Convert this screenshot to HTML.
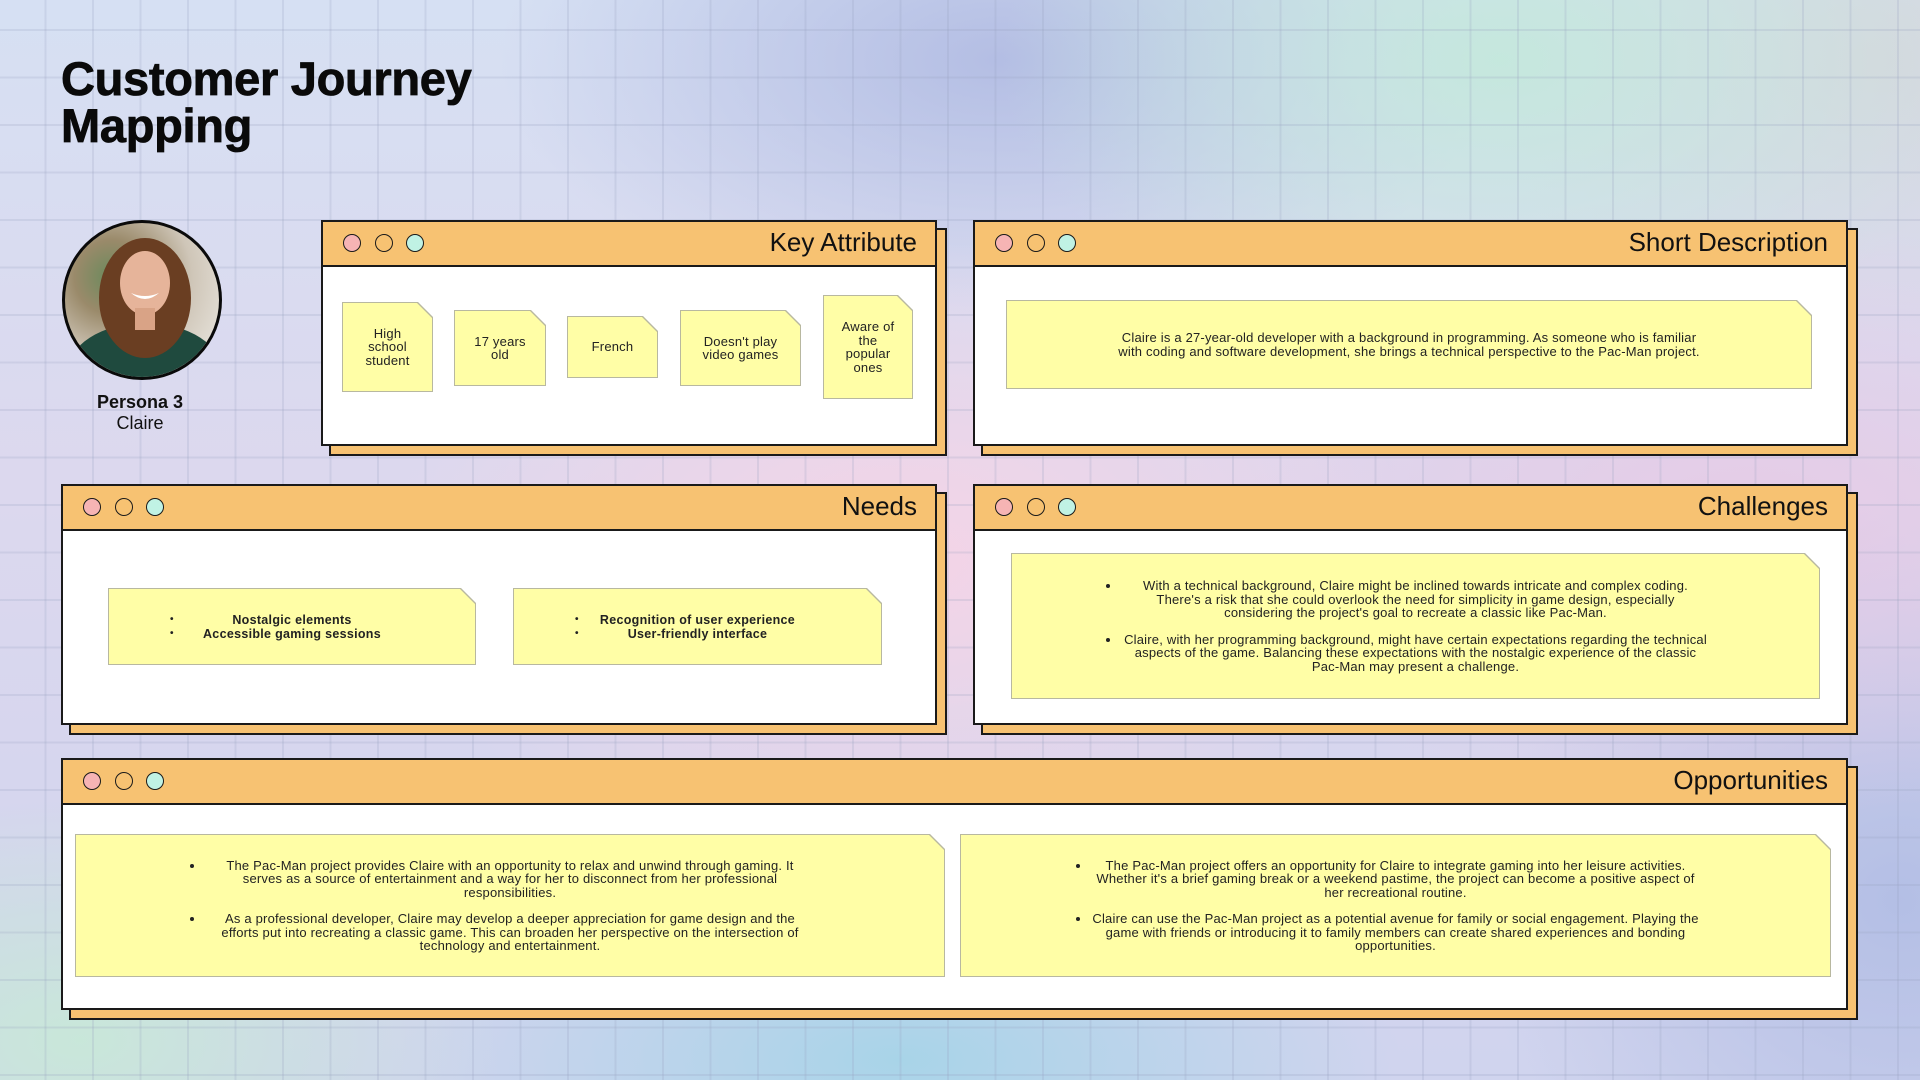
<!DOCTYPE html>
<html><head><meta charset="utf-8">
<style>
*{margin:0;padding:0;box-sizing:border-box}
html,body{width:1920px;height:1080px;overflow:hidden}
body{position:relative;font-family:"Liberation Sans",sans-serif;color:#111;
background:
 radial-gradient(ellipse 520px 320px at 900px 560px, rgba(246,212,230,.95), rgba(246,212,230,0) 100%),
 radial-gradient(ellipse 600px 300px at 1750px 520px, rgba(232,200,228,.8), rgba(232,200,228,0) 100%),
 radial-gradient(ellipse 500px 300px at 1500px 60px, rgba(196,232,220,.95), rgba(196,232,220,0) 100%),
 radial-gradient(ellipse 500px 260px at 1000px 60px, rgba(176,186,226,.9), rgba(176,186,226,0) 100%),
 radial-gradient(ellipse 420px 240px at 80px 1040px, rgba(200,232,216,.95), rgba(200,232,216,0) 100%),
 radial-gradient(ellipse 500px 200px at 900px 1060px, rgba(166,212,232,.95), rgba(166,212,232,0) 100%),
 radial-gradient(ellipse 420px 400px at 1900px 900px, rgba(176,188,228,.9), rgba(176,188,228,0) 100%),
 radial-gradient(ellipse 400px 300px at 1880px 60px, rgba(214,214,220,.9), rgba(214,214,220,0) 100%),
 linear-gradient(180deg,#d6e0f3 0%,#dcd8ee 45%,#d0d4ee 100%);}
.grid{position:absolute;inset:0;
background-image:linear-gradient(90deg,rgba(150,160,190,.22) 2px,transparent 2px),linear-gradient(180deg,rgba(150,160,190,.22) 2px,transparent 2px);
background-size:47.5px 47.5px;background-position:-3px 29px;}
h1{position:absolute;left:61px;top:55px;font-size:47px;line-height:47px;font-weight:700;letter-spacing:-0.3px;color:#0a0a0a;-webkit-text-stroke:0.8px #0a0a0a}
.avatar{position:absolute;left:62px;top:220px;width:160px;height:160px;border-radius:50%;border:3px solid #0a0a0a;overflow:hidden;
background:radial-gradient(circle at 30% 35%,#6a8a5c 0,#9a8a6a 25%,#cfc6b8 55%,#e2ddd4 80%)}
.persona{position:absolute;left:60px;width:160px;text-align:center;font-size:18px}
.win{position:absolute;background:#fff;border:2px solid #1a1a1a;box-shadow:9px 9px 0 -1px #f7c272,9px 9px 0 1px #1a1a1a}
.hd{height:45px;background:#f7c272;border-bottom:2px solid #1a1a1a;position:relative}
.hd .t{position:absolute;right:18px;top:5px;font-size:26px;font-weight:500}
.dot{position:absolute;top:12px;width:18px;height:18px;border-radius:50%;border:1.5px solid #1a1a1a}
.d1{left:20px;background:#f6b4b4}.d2{left:52px;background:#f7c272}.d3{left:83px;background:#c0f2e4}
.note{position:absolute;background:#b8b8a0;clip-path:polygon(0 0,calc(100% - 15px) 0,100% 15px,100% 100%,0 100%)}
.note>div{position:absolute;inset:1px;background:#fffea6;clip-path:polygon(0 0,calc(100% - 15px) 0,100% 15px,100% 100%,0 100%);
display:flex;align-items:center;justify-content:center;text-align:center;font-size:13px;line-height:13.5px;letter-spacing:.2px;color:#222;padding:4px}
ul{list-style:disc;text-align:center}
.sp li+li{margin-top:13px}
.nd{position:relative;width:100%;font-weight:700;font-size:12.5px;line-height:14px;letter-spacing:.3px}
.nd b{position:absolute;left:57px;font-size:10px}
</style></head><body>
<div class="grid"></div>
<h1>Customer Journey<br>Mapping</h1>
<div class="avatar">
<svg width="160" height="160" viewBox="0 0 160 160">
<ellipse cx="80" cy="150" rx="78" ry="50" fill="#1f4a3e"/>
<ellipse cx="80" cy="75" rx="46" ry="60" fill="#6a3e22"/>
<ellipse cx="80" cy="60" rx="25" ry="32" fill="#e6b49a"/>
<rect x="70" y="85" width="20" height="22" fill="#d9a386"/>
<path d="M66 70 Q80 82 94 70 Q80 76 66 70Z" fill="#fff"/>
</svg></div>
<div class="persona" style="top:392px;font-weight:700">Persona 3</div>
<div class="persona" style="top:413px">Claire</div>

<div class="win" style="left:321px;top:220px;width:616px;height:226px">
<div class="hd"><span class="dot d1"></span><span class="dot d2"></span><span class="dot d3"></span><span class="t">Key Attribute</span></div>
</div>
<div class="note" style="left:342px;top:302px;width:91px;height:90px"><div>High<br>school<br>student</div></div>
<div class="note" style="left:454px;top:310px;width:92px;height:76px"><div>17 years<br>old</div></div>
<div class="note" style="left:567px;top:316px;width:91px;height:62px"><div>French</div></div>
<div class="note" style="left:680px;top:310px;width:121px;height:76px"><div>Doesn't play<br>video games</div></div>
<div class="note" style="left:823px;top:295px;width:90px;height:104px"><div>Aware of<br>the<br>popular<br>ones</div></div>

<div class="win" style="left:973px;top:220px;width:875px;height:226px">
<div class="hd"><span class="dot d1"></span><span class="dot d2"></span><span class="dot d3"></span><span class="t">Short Description</span></div>
</div>
<div class="note" style="left:1006px;top:300px;width:806px;height:89px"><div><span style="max-width:585px">Claire is a 27-year-old developer with a background in programming. As someone who is familiar with coding and software development, she brings a technical perspective to the Pac-Man project.</span></div></div>

<div class="win" style="left:61px;top:484px;width:876px;height:241px">
<div class="hd"><span class="dot d1"></span><span class="dot d2"></span><span class="dot d3"></span><span class="t">Needs</span></div>
</div>
<div class="note" style="left:108px;top:588px;width:368px;height:77px"><div><div class="nd"><b>•</b>Nostalgic elements<br><b>•</b>Accessible gaming sessions</div></div></div>
<div class="note" style="left:513px;top:588px;width:369px;height:77px"><div><div class="nd"><b>•</b>Recognition of user experience<br><b>•</b>User-friendly interface</div></div></div>

<div class="win" style="left:973px;top:484px;width:875px;height:241px">
<div class="hd"><span class="dot d1"></span><span class="dot d2"></span><span class="dot d3"></span><span class="t">Challenges</span></div>
</div>
<div class="note" style="left:1011px;top:553px;width:809px;height:146px"><div><ul class="sp" style="max-width:590px"><li>With a technical background, Claire might be inclined towards intricate and complex coding. There's a risk that she could overlook the need for simplicity in game design, especially considering the project's goal to recreate a classic like Pac-Man.</li><li>Claire, with her programming background, might have certain expectations regarding the technical aspects of the game. Balancing these expectations with the nostalgic experience of the classic Pac-Man may present a challenge.</li></ul></div></div>

<div class="win" style="left:61px;top:758px;width:1787px;height:252px">
<div class="hd"><span class="dot d1"></span><span class="dot d2"></span><span class="dot d3"></span><span class="t">Opportunities</span></div>
</div>
<div class="note" style="left:75px;top:834px;width:870px;height:143px"><div><ul class="sp" style="max-width:610px"><li>The Pac-Man project provides Claire with an opportunity to relax and unwind through gaming. It serves as a source of entertainment and a way for her to disconnect from her professional responsibilities.</li><li>As a professional developer, Claire may develop a deeper appreciation for game design and the efforts put into recreating a classic game. This can broaden her perspective on the intersection of technology and entertainment.</li></ul></div></div>
<div class="note" style="left:960px;top:834px;width:871px;height:143px"><div><ul class="sp" style="max-width:610px"><li>The Pac-Man project offers an opportunity for Claire to integrate gaming into her leisure activities. Whether it's a brief gaming break or a weekend pastime, the project can become a positive aspect of her recreational routine.</li><li>Claire can use the Pac-Man project as a potential avenue for family or social engagement. Playing the game with friends or introducing it to family members can create shared experiences and bonding opportunities.</li></ul></div></div>
</body></html>
